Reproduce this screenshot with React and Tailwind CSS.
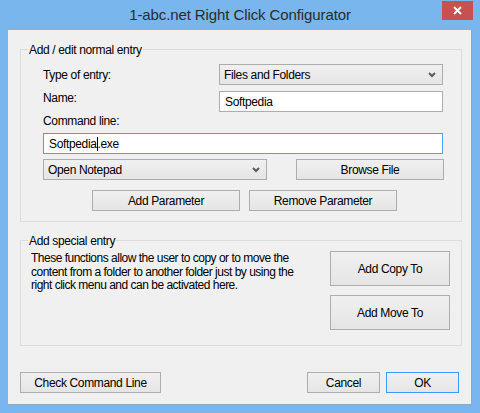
import React from "react";

const font = { fontFamily: '"Liberation Sans", Arial, sans-serif' };

const Chevron = () => (
  <svg width="8" height="6" viewBox="0 0 8 6" className="shrink-0">
    <polyline points="1,1 4,4 7,1" fill="none" stroke="#5a5a5a" strokeWidth="2" />
  </svg>
);

const Btn = ({ children, className = "", def = false }) => (
  <div
    className={`flex items-center justify-center border bg-gradient-to-b from-[#f0f0f0] to-[#e5e5e5] text-[12px] text-black ${
      def ? "border-[#3c9bf0]" : "border-[#adadad]"
    } ${className}`}
  >
    {children}
  </div>
);

const Combo = ({ value, className = "" }) => (
  <div
    className={`flex items-center justify-between border border-[#acacac] bg-gradient-to-b from-[#f0f0f0] to-[#e5e5e5] pl-[4px] pr-[6px] text-[12px] text-black ${className}`}
  >
    <span>{value}</span>
    <Chevron />
  </div>
);

const Group = ({ title, className = "", children }) => (
  <div className={`relative border border-[#dcdcdc] ${className}`}>
    <span className="absolute -top-[8px] left-[7px] bg-[#f0f0f0] px-[1px] text-[12px] leading-[16px] text-black">
      {title}
    </span>
    {children}
  </div>
);

export default function App() {
  return (
    <div style={font} className="flex h-[413px] w-[480px] flex-col bg-[#7ab6ee] select-none">
      {/* title bar */}
      <div className="relative flex h-[30px] shrink-0 items-center justify-center">
        <span className="text-[15px] leading-[20px] tracking-[-0.1px] text-[#2b2b2b]">1-abc.net Right Click Configurator</span>
        <div className="absolute right-[7px] top-[1px] flex h-[19px] w-[31px] items-center justify-center bg-[#c75050]">
          <svg width="9" height="9" viewBox="0 0 9 9">
            <path d="M1 1 L8 8 M8 1 L1 8" stroke="#fff" strokeWidth="1.8" />
          </svg>
        </div>
      </div>

      {/* client area */}
      <div className="mx-[8px] flex h-[375px] flex-col border-r border-b border-[#8aa9c8] bg-[#f0f0f0] text-[12px] leading-[16px] tracking-[-0.35px] text-black">
        <Group title="Add / edit normal entry" className="ml-[12px] mr-[9px] mt-[19px] flex flex-col pl-[22px] pr-[18px] pt-[14px] pb-[10px]">
          <div className="flex h-[21px] items-center justify-between">
            <span>Type of entry:</span>
            <Combo value="Files and Folders" className="h-[21px] w-[224px]" />
          </div>
          <div className="mt-[6px] flex h-[21px] items-start justify-between">
            <span className="-mt-px">Name:</span>
            <div className="flex h-[21px] w-[224px] items-center border border-[#abadb3] bg-white pl-[5px]">Softpedia</div>
          </div>
          <span className="mt-[1px]">Command line:</span>
          <div className="mt-[4px] flex h-[21px] w-[400px] items-center border border-[#569de5] bg-white pl-[5px]">
            Softpedia<span className="inline-block h-[14px] w-px bg-black" />.exe
          </div>
          <div className="mt-[5px] flex h-[21px] w-[401px] items-center justify-between">
            <Combo value="Open Notepad" className="h-[21px] w-[224px]" />
            <Btn className="h-[21px] w-[148px]">Browse File</Btn>
          </div>
          <div className="mt-[10px] flex h-[21px] gap-[9px] pl-[49px]">
            <Btn className="h-[21px] w-[148px]">Add Parameter</Btn>
            <Btn className="h-[21px] w-[148px]">Remove Parameter</Btn>
          </div>
        </Group>

        <Group title="Add special entry" className="ml-[12px] mr-[9px] mt-[18px] flex justify-between pl-[10px] pr-[11px] pt-[10px] pb-[15px]">
          <p className="mt-[1px] whitespace-nowrap leading-[13.5px] tracking-[-0.5px]">
            These functions allow the user to copy or to move the
            <br />
            content from a folder to another folder just by using the
            <br />
            right click menu and can be activated here.
          </p>
          <div className="flex flex-col gap-[9px]">
            <Btn className="h-[35px] w-[120px]">Add Copy To</Btn>
            <Btn className="h-[35px] w-[120px]">Add Move To</Btn>
          </div>
        </Group>

        <div className="mx-[12px] mt-[26px] flex items-center">
          <Btn className="h-[21px] w-[141px]">Check Command Line</Btn>
          <Btn className="ml-auto h-[21px] w-[73px]">Cancel</Btn>
          <Btn def className="ml-[6px] h-[21px] w-[73px]">OK</Btn>
        </div>
      </div>
    </div>
  );
}
